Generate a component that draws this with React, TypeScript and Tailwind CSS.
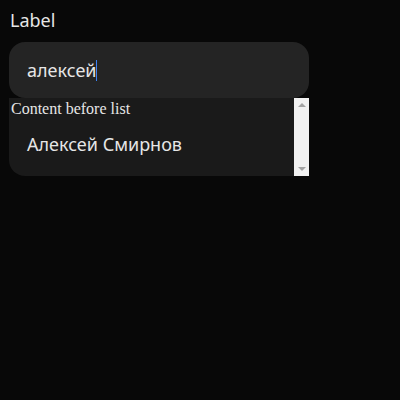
import React from "react";

export default function App() {
  return (
    <div className="min-h-[400px] w-[400px] bg-[#080808] p-[9px]" style={{ fontFamily: '"Noto Sans", sans-serif' }}>
      <div className="w-[300px]">
        <div className="text-[18px] leading-[20px] text-[#e6e6e6] pt-[1px] pl-[1px]">Label</div>
        <div className="mt-[12px] h-[56px] rounded-[16px] bg-[#242424] flex items-center px-[18px] text-[18px] text-[#e6e6e6]">
          <span>алексей</span>
          <span className="inline-block w-[1px] h-[21px] bg-[#3b82f6]" />
        </div>
        <div className="h-[78px] flex rounded-bl-[16px] bg-[#1a1a1a] text-[#e6e6e6]">
          <div className="flex-1 min-w-0">
            <div className="text-[16px] leading-[20px] pl-[2px] pt-[1px]" style={{ fontFamily: '"Liberation Serif", serif' }}>Content before list</div>
            <div className="px-[18px] pt-[13px] text-[18px] leading-[24px]">Алексей Смирнов</div>
          </div>
          <div className="w-[15px] bg-[#f1f1f1] flex flex-col items-center justify-between py-[5px]">
            <svg width="8" height="4" viewBox="0 0 8 4"><path d="M0 4 L4 0 L8 4 Z" fill="#a3a3a3" /></svg>
            <svg width="8" height="4" viewBox="0 0 8 4"><path d="M0 0 L4 4 L8 0 Z" fill="#a3a3a3" /></svg>
          </div>
        </div>
      </div>
    </div>
  );
}
